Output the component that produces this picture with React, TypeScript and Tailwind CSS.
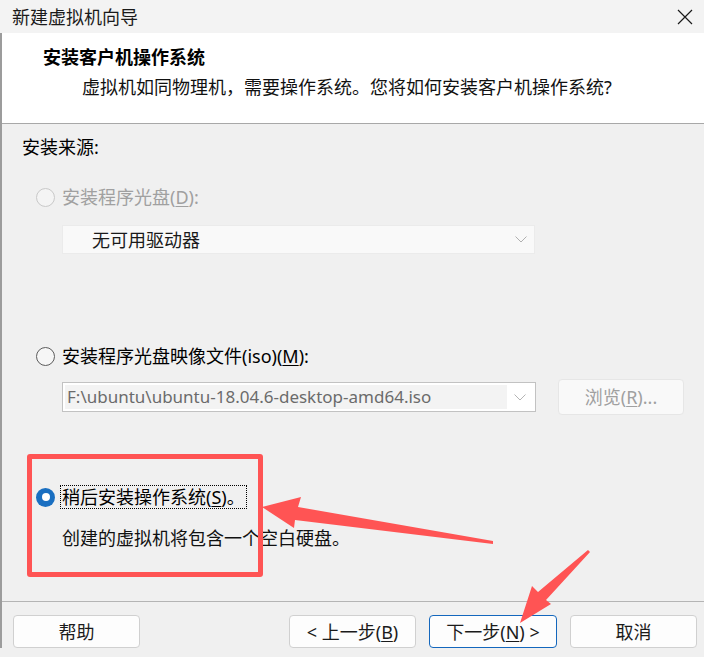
import React from "react";

type RadioState = "on" | "off" | "disabled";

function Radio({ state }: { state: RadioState }) {
  if (state === "on") {
    return (
      <span className="flex h-[19px] w-[19px] shrink-0 items-center justify-center rounded-full bg-[#1a6fc1]">
        <span className="h-[8px] w-[8px] rounded-full bg-white" />
      </span>
    );
  }
  return (
    <span
      className={
        state === "disabled"
          ? "h-[19px] w-[19px] shrink-0 rounded-full border border-[#c9c9c9] bg-[#f4f4f4]"
          : "h-[19px] w-[19px] shrink-0 rounded-full border border-[#5c5c5c] bg-[#f6f6f6]"
      }
    />
  );
}

function Chevron({ color }: { color: string }) {
  return (
    <svg width="12" height="7" viewBox="0 0 12 7" fill="none">
      <polyline points="0.5,0.5 6,6 11.5,0.5" stroke={color} strokeWidth="1" />
    </svg>
  );
}

function Btn({ children, primary }: { children: React.ReactNode; primary?: boolean }) {
  return (
    <button
      className={
        primary
          ? "flex h-[33px] w-[128px] items-center justify-center rounded-[4px] border border-[#1467bd] bg-[#fdfdfd] text-[18px] text-[#1b1b1b]"
          : "flex h-[33px] w-[127px] items-center justify-center rounded-[4px] border border-[#d0d0d0] bg-[#fdfdfd] text-[18px] text-[#1b1b1b]"
      }
    >
      {children}
    </button>
  );
}

export default function App() {
  return (
    <div className="relative h-[657px] w-[704px] overflow-hidden bg-[#f0f0f0] font-['Noto_Sans','Noto_Sans_CJK_SC',sans-serif] leading-[24px] text-black">
      {/* title bar */}
      <div className="flex h-[33px] items-center justify-between bg-[#f3f3f3] pl-[12px] pr-[10px]">
        <span className="text-[18px] text-[#1a1a1a]">新建虚拟机向导</span>
        <svg width="16" height="16" viewBox="0 0 16 16" className="mr-[1px]">
          <path d="M1 1 L15 15 M15 1 L1 15" stroke="#1a1a1a" strokeWidth="1.2" />
        </svg>
      </div>

      <div className="border-l-2 border-[#9c9c9c]">
        {/* header */}
        <div className="h-[91px] border-b border-[#a8a8a8] bg-white pt-[45px] relative">
          <div className="absolute left-[41px] top-[12px] text-[18px] font-bold">安装客户机操作系统</div>
          <div className="absolute left-[80px] top-[42px] text-[18px] text-[#111]">
            虚拟机如同物理机，需要操作系统。您将如何安装客户机操作系统?
          </div>
        </div>

        {/* content */}
        <div className="flex h-[478px] flex-col border-b border-[#b4b4b4]">
          <div className="mt-[11px] pl-[20px] text-[18px]">安装来源:</div>

          <div className="mt-[26px] flex items-center gap-[7px] pl-[34px] text-[18px] text-[#a0a0a0]">
            <Radio state="disabled" />
            <span>
              安装程序光盘(<span className="underline underline-offset-2">D</span>):
            </span>
          </div>

          <div className="ml-[60px] mt-[16px] flex h-[29px] w-[473px] items-center justify-between border border-[#ebebeb] bg-[#f9f9f9] pl-[29px] pr-[7px] text-[18px] text-[#1a1a1a]">
            <span>无可用驱动器</span>
            <Chevron color="#b0b0b0" />
          </div>

          <div className="mt-[90px] flex items-center gap-[7px] pl-[34px] text-[18px]">
            <Radio state="off" />
            <span>
              安装程序光盘映像文件(iso)(<span className="underline underline-offset-2">M</span>):
            </span>
          </div>

          <div className="mt-[11px] flex items-center pl-[60px]">
            <div className="flex h-[30px] w-[474px] items-center border border-[#c2c2c2] bg-white p-[2px]">
              <div className="flex h-full w-[442px] items-center bg-[#f3f3f3] pl-[2px] text-[17px] text-[#6b6b6b]">
                F:\ubuntu\ubuntu-18.04.6-desktop-amd64.iso
              </div>
              <div className="flex flex-1 items-center justify-center">
                <Chevron color="#b4b4b4" />
              </div>
            </div>
            <div className="ml-[22px] flex h-[36px] w-[126px] items-center justify-center rounded-[4px] border border-[#e6e6e6] bg-[#f9f9f9] text-[18px] text-[#a0a0a0]">
              浏览(<span className="underline underline-offset-2">R</span>)...
            </div>
          </div>

          <div className="mt-[70px] flex items-center gap-[5px] pl-[34px] text-[18px]">
            <Radio state="on" />
            <span className="border border-dotted border-black px-[1px] leading-[22px]">
              稍后安装操作系统(<span className="underline underline-offset-2">S</span>)。
            </span>
          </div>

          <div className="mt-[17px] pl-[60px] text-[18px] text-[#111]">创建的虚拟机将包含一个空白硬盘。</div>
        </div>

        {/* footer */}
        <div className="flex items-center pl-[11px] pr-[7px] pt-[13px]">
          <Btn>帮助</Btn>
          <div className="ml-auto flex gap-[13px]">
            <Btn>
              &lt; 上一步(<span className="underline underline-offset-2">B</span>)
            </Btn>
            <Btn primary>
              下一步(<span className="underline underline-offset-2">N</span>) &gt;
            </Btn>
            <Btn>取消</Btn>
          </div>
        </div>
      </div>

      {/* annotations */}
      <div className="pointer-events-none absolute left-[27px] top-[454px] h-[123px] w-[236px] rounded-[3px] border-[5px] border-[#ff5454]" />
      <svg className="pointer-events-none absolute left-0 top-0" width="704" height="657" viewBox="0 0 704 657">
        <polygon points="262,507 301,497 298,507 493,541 493,544 295,520 294,528" fill="#ff5454" />
        <polygon points="520,623 532,586 538,592 588,550 590,552 546,600 551,604" fill="#ff5454" />
      </svg>
    </div>
  );
}
